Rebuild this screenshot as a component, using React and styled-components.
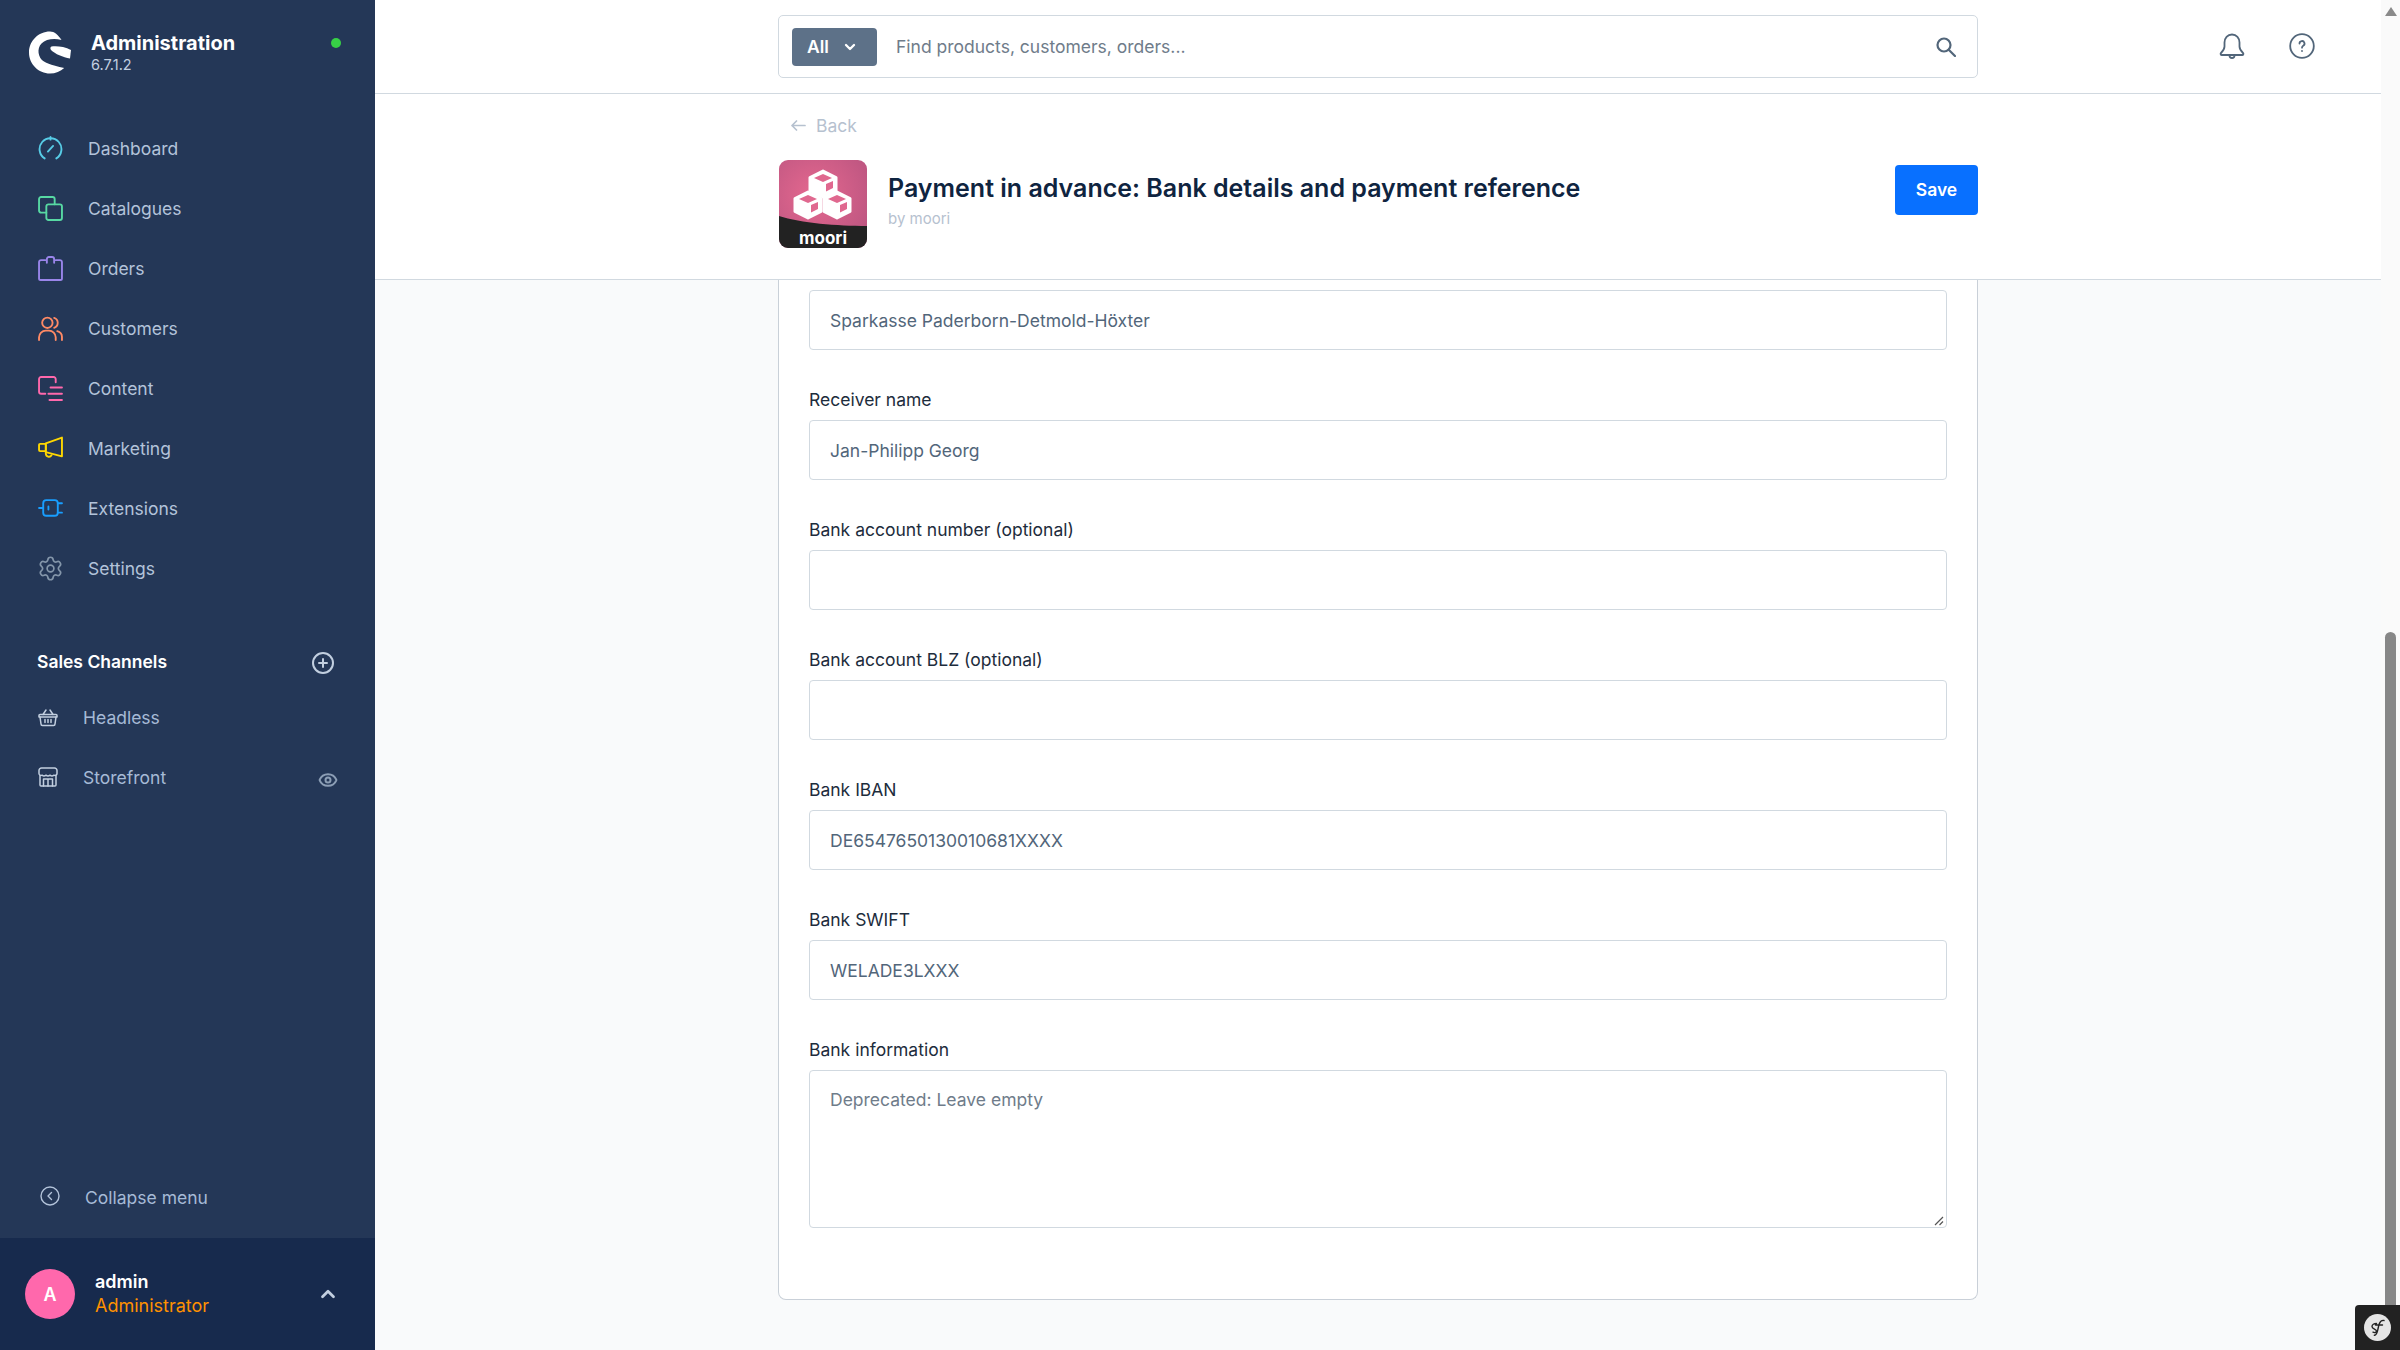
import React from 'react'
import styled, { createGlobalStyle } from 'styled-components'
import { ChevronDown, ChevronUp, CirclePlus, Eye, Settings } from 'lucide-react'

const GlobalStyle = createGlobalStyle`
  html, body {
    margin: 0;
    height: 100%;
    overflow: hidden;
  }
  * {
    box-sizing: border-box;
  }
  body {
    font-family: Inter, "Liberation Sans", sans-serif;
    background: #f9fafb;
  }
`

const Shell = styled.div`
  display: flex;
  width: 2400px;
  height: 1350px;
  overflow: hidden;
  position: relative;
`

const Sidebar = styled.aside`
  width: 375px;
  flex: none;
  display: flex;
  flex-direction: column;
  background: #243757;
`

const Brand = styled.div`
  display: flex;
  align-items: center;
  height: 93px;
  padding: 12px 34px 0 29px;
`

const BrandText = styled.div`
  margin: 0 0 1px 20px;
  flex: 1;
  display: flex;
  flex-direction: column;
`

const BrandName = styled.span`
  font-size: 20px;
  font-weight: 700;
  line-height: 24px;
  color: #fff;
`

const BrandVersion = styled.span`
  font-size: 14.5px;
  line-height: 19px;
  color: #c2cfe0;
`

const StatusDot = styled.span`
  width: 10px;
  height: 10px;
  border-radius: 50%;
  background: #37d046;
  margin-bottom: 19px;
`

const NavList = styled.nav`
  display: flex;
  flex-direction: column;
  padding-top: 25px;
`

const NavRow = styled.div`
  display: flex;
  align-items: center;
  height: 60px;
  padding-left: 38px;
  gap: 25px;
  font-size: 17.5px;
  color: #b3c3da;
`

const NavIcon = styled.svg`
  width: 25px;
  height: 25px;
  flex: none;
  fill: none;
  stroke: ${(p) => p.$color};
  stroke-width: 1.8;
  stroke-linecap: round;
  stroke-linejoin: round;
`

const GearIcon = styled(Settings)`
  margin: 0 -1px;
  flex: none;
`

const SectionHead = styled.div`
  display: flex;
  align-items: center;
  justify-content: space-between;
  margin-top: 41px;
  margin-bottom: 4px;
  height: 44px;
  padding: 0 40px 0 37px;
  font-size: 17.5px;
  font-weight: 600;
  color: #fff;

  svg {
    color: #c2cfe0;
    margin-top: 4px;
  }
`

const ChannelRow = styled.div`
  display: flex;
  align-items: center;
  height: 60px;
  padding: 0 37px 0 38px;
  gap: 25px;
  font-size: 17.5px;
  color: #a6bad6;

  span {
    flex: 1;
  }
`

const ChannelIcon = styled.svg`
  width: 20px;
  height: 20px;
  flex: none;
  fill: none;
  stroke: #c2cfe0;
  stroke-width: 1.5;
  stroke-linecap: round;
  stroke-linejoin: round;
`

const EyeIcon = styled(Eye)`
  margin-top: 5px;
`

const Spacer = styled.div`
  flex: 1;
`

const Collapse = styled.div`
  display: flex;
  align-items: center;
  height: 60px;
  padding-left: 40px;
  gap: 25px;
  margin-bottom: 11px;
  font-size: 17.5px;
  color: #a6bad6;

  svg {
    margin-top: -2px;
  }
`

const UserBar = styled.div`
  display: flex;
  align-items: center;
  height: 112px;
  padding: 0 36px 0 25px;
  background: #172a4d;
`

const Avatar = styled.div`
  width: 50px;
  height: 50px;
  border-radius: 50%;
  display: flex;
  align-items: center;
  justify-content: center;
  background: #ff68ac;
  color: #fff;
  font-size: 18px;
  font-weight: 600;
`

const UserText = styled.div`
  flex: 1;
  margin-left: 20px;
  display: flex;
  flex-direction: column;
  font-size: 18px;
  line-height: 24px;
`

const UserName = styled.span`
  color: #fff;
  font-weight: 600;
`

const UserRole = styled.span`
  color: #ff9100;
`

const Main = styled.main`
  flex: 1;
  min-width: 0;
  display: flex;
  flex-direction: column;
  padding-right: 19px;
  position: relative;
`

const TopBar = styled.header`
  height: 94px;
  flex: none;
  background: #fff;
  border-bottom: 1px solid #d1d9e0;
  display: flex;
  align-items: center;
  padding-left: 403px;
`

const SearchBox = styled.div`
  width: 1200px;
  height: 63px;
  display: flex;
  align-items: center;
  padding: 0 21px 0 13px;
  border: 1px solid #d1d9e0;
  border-radius: 5px;
`

const ScopeButton = styled.div`
  width: 85px;
  height: 38px;
  border-radius: 4px;
  background: #5d7188;
  color: #fff;
  font-size: 17.5px;
  font-weight: 600;
  display: flex;
  align-items: center;
  gap: 13px;
  padding-left: 15px;
`

const SearchText = styled.span`
  flex: 1;
  margin-left: 19px;
  font-size: 17.5px;
  color: #6f7c8a;
`

const SearchGlyph = styled.svg`
  width: 20px;
  height: 20px;
  fill: none;
  stroke: #52667a;
  stroke-width: 2.2;
  stroke-linecap: round;
`

const TopIcons = styled.div`
  display: flex;
  align-items: center;
  gap: 44px;
  margin: -1px 0 0 241px;
`

const TopIcon = styled.svg`
  width: 26px;
  height: 26px;
  fill: none;
  stroke: #52667a;
  stroke-width: 1.8;
  stroke-linecap: round;
  stroke-linejoin: round;
`

const PageHead = styled.section`
  height: 186px;
  flex: none;
  background: #fff;
  border-bottom: 1px solid #d1d9e0;
  padding: 19px 0 0 403px;
`

const BackLink = styled.div`
  display: flex;
  align-items: center;
  gap: 10px;
  height: 24px;
  padding-left: 13px;
  font-size: 17.5px;
  color: #b6c1cf;
`

const BackArrow = styled.svg`
  width: 15px;
  height: 11px;
  fill: none;
  stroke: #b6c1cf;
  stroke-width: 1.7;
  stroke-linecap: round;
  stroke-linejoin: round;
`

const TitleRow = styled.div`
  display: flex;
  align-items: center;
  width: 1200px;
  margin-top: 23px;
  padding-left: 1px;
`

const AppLogo = styled.div`
  width: 88px;
  height: 88px;
  border-radius: 9px;
  overflow: hidden;
  position: relative;
  flex: none;
  background: radial-gradient(circle at 40% 40%, #e5688f, #b5527e);
`

const LogoLabel = styled.span`
  position: absolute;
  left: 0;
  right: 0;
  bottom: 0;
  text-align: center;
  color: #fff;
  font-size: 17px;
  font-weight: 700;
  line-height: 20px;
`

const TitleText = styled.div`
  flex: 1;
  margin: 0 0 7px 21px;
  display: flex;
  flex-direction: column;
`

const Title = styled.h1`
  margin: 0;
  font-size: 25px;
  font-weight: 600;
  line-height: 34px;
  color: #0f2440;
`

const Byline = styled.span`
  font-size: 15px;
  line-height: 22px;
  margin-top: 3px;
  color: #b6c1cf;
`

const SaveButton = styled.button`
  width: 83px;
  height: 50px;
  margin-bottom: 29px;
  border: 0;
  border-radius: 4px;
  background: #0870ff;
  color: #fff;
  font: 600 17.5px Inter, sans-serif;
`

const Body = styled.div`
  flex: 1;
  min-height: 0;
  padding-left: 403px;
`

const Card = styled.div`
  width: 1200px;
  height: 1020px;
  padding: 10px 30px 0;
  background: #fff;
  border: 1px solid #c9d0d8;
  border-top: 0;
  border-radius: 0 0 8px 8px;
`

const Field = styled.div`
  margin-bottom: 30px;
`

const Label = styled.label`
  display: block;
  height: 40px;
  padding-top: 8px;
  font-size: 17.5px;
  line-height: 24px;
  color: #1d2c3c;
`

const Input = styled.div`
  height: 60px;
  padding: 0 20px;
  display: flex;
  align-items: center;
  border: 1px solid #d1d9e0;
  border-radius: 4px;
  font-size: 17.5px;
  color: #52667a;
`

const TextArea = styled.div`
  height: 158px;
  padding: 17px 20px;
  position: relative;
  border: 1px solid #d1d9e0;
  border-radius: 4px;
  font-size: 17.5px;
  line-height: 24px;
  color: #6f7c8a;

  svg {
    position: absolute;
    right: 2px;
    bottom: 1px;
  }
`

const Scrollbar = styled.div`
  position: absolute;
  top: 0;
  right: 0;
  bottom: 0;
  width: 19px;
  background: #fafafa;
`

const ScrollThumb = styled.div`
  position: absolute;
  top: 632px;
  bottom: 0;
  left: 4px;
  width: 11px;
  border-radius: 6px 6px 0 0;
  background: #878787;
`

const ScrollArrow = styled.div`
  position: absolute;
  top: 7px;
  left: 4px;
  width: 0;
  height: 0;
  border-left: 6px solid transparent;
  border-right: 6px solid transparent;
  border-bottom: 9px solid #8a8a8a;
`

const DebugToolbar = styled.div`
  position: absolute;
  right: 0;
  bottom: 0;
  width: 45px;
  height: 45px;
  padding: 9px;
  background: #222;
  border-top-left-radius: 4px;
`

// menu entries, the drawings are redone by hand from the reference
const NAV = [
  {
    label: 'Dashboard',
    color: '#57cce6',
    icon: (
      <>
        <path d="M6.4 21.5A10.5 10.5 0 1 1 17.6 21.5" />
        <path d="M9.5 15 14.5 9.5" />
        <path d="M12 1v2.5" />
      </>
    ),
  },
  {
    label: 'Catalogues',
    color: '#57d9a3',
    icon: (
      <>
        <path d="M8 16H3a2 2 0 0 1-2-2V3a2 2 0 0 1 2-2h11a2 2 0 0 1 2 2v5" />
        <rect x="8" y="8" width="15" height="15" rx="2" />
      </>
    ),
  },
  {
    label: 'Orders',
    color: '#9a85ea',
    icon: (
      <>
        <path d="M7 4H3a2 2 0 0 0-2 2v15.5A1.5 1.5 0 0 0 2.5 23h19a1.5 1.5 0 0 0 1.5-1.5V6a2 2 0 0 0-2-2h-4" />
        <path d="M8.5 6.5V3a2 2 0 0 1 2-2h3a2 2 0 0 1 2 2v3.5" />
      </>
    ),
  },
  {
    label: 'Customers',
    color: '#ff8a65',
    icon: (
      <>
        <circle cx="9" cy="6.5" r="5" />
        <path d="M1 23v-2.5A6.5 6.5 0 0 1 7.5 14h3a6.5 6.5 0 0 1 6.5 6.5V23" />
        <path d="M15.5 1.8a5 5 0 0 1 0 9.5" />
        <path d="M18.5 14.5A6 6 0 0 1 23 20.5V23" />
      </>
    ),
  },
  {
    label: 'Content',
    color: '#ff68ac',
    icon: (
      <>
        <path d="M17 6V3a2 2 0 0 0-2-2H3a2 2 0 0 0-2 2v12a2 2 0 0 0 2 2h4" />
        <path d="M12 11h11M10 17h13M11 23h12" />
      </>
    ),
  },
  {
    label: 'Marketing',
    color: '#ffd700',
    icon: (
      <>
        <path d="M7.5 7 23 1.5v18L7.5 15.5z" />
        <rect x="1" y="7.5" width="6.5" height="7" rx="1" />
        <path d="M7.5 15.5V17a3 3 0 0 0 5.5 1.5" />
      </>
    ),
  },
  {
    label: 'Extensions',
    color: '#189eff',
    icon: (
      <>
        <rect x="5" y="4" width="14" height="15" rx="3" />
        <path d="M1 11.5h4M19 7h4M19 16h4M10 10v3" />
      </>
    ),
  },
]

const Logo = () => (
  <svg width="42" height="43" viewBox="0 0 42 42">
    <path
      fill="#fff"
      d="M21 0C9.4 0 0 9.4 0 21s9.4 21 21 21c5.5 0 10.5-2.1 14.2-5.6-5.5-.9-14.5-3.1-20.2-6.4C9 26.5 7.5 17 12.5 12c4.5-4.5 12.5-5.5 20-3.500C29 3.200 25.500 0 21 0z"
    />
    <path fill="#fff" d="M22.5 15c4-.8 13-.2 19.5 3.500L41 27c-7-1.200-15-4.500-19-8.500-1-1-.8-3 .5-3.500z" />
  </svg>
)

const Cube = ({ x, y }) => (
  <g transform={`translate(${x} ${y})`}>
    <path fill="#fff" stroke="#fff" strokeWidth="3" strokeLinejoin="round" d="M0-13 13-6.5V6.5L0 13-13 6.5V-6.5z" />
    <path fill="#e0688f" d="M0-10 9-6 0-2-9-6z" />
    <path fill="#e0688f" d="M3 0 10-3V4L3 7.5z" />
  </g>
)

const MooriLogo = () => (
  <svg width="88" height="88" viewBox="0 0 88 88">
    <path fill="#222" d="M0 56c22 7 58 10 88 10v22H0z" />
    <Cube x={44} y={24} />
    <Cube x={29} y={45} />
    <Cube x={58} y={45} />
  </svg>
)

const fields = [
  { label: 'Receiver name', value: 'Jan-Philipp Georg' },
  { label: 'Bank account number (optional)', value: '' },
  { label: 'Bank account BLZ (optional)', value: '' },
  { label: 'Bank IBAN', value: 'DE6547650130010681XXXX' },
  { label: 'Bank SWIFT', value: 'WELADE3LXXX' },
]

const App = () => {
  return (
    <>
      <GlobalStyle />
      <Shell>
        <Sidebar>
          <Brand>
            <Logo />
            <BrandText>
              <BrandName>Administration</BrandName>
              <BrandVersion>6.7.1.2</BrandVersion>
            </BrandText>
            <StatusDot />
          </Brand>
          <NavList>
            {NAV.map((item) => (
              <NavRow key={item.label}>
                <NavIcon viewBox="0 0 24 24" $color={item.color}>
                  {item.icon}
                </NavIcon>
                {item.label}
              </NavRow>
            ))}
            <NavRow>
              <GearIcon size={27} strokeWidth={1.5} color="#8496aa" />
              Settings
            </NavRow>
          </NavList>
          <SectionHead>
            Sales Channels
            <CirclePlus size={24} strokeWidth={2} />
          </SectionHead>
          <ChannelRow>
            <ChannelIcon viewBox="0 0 20 20">
              <path d="M1 8.5a1 1 0 0 1 1-1h16a1 1 0 0 1 1 1V10H1z" />
              <path d="M2 10l1 7a1.5 1.5 0 0 0 1.5 1.5h11A1.5 1.5 0 0 0 17 17l1-7" />
              <path d="M5 7.5 8 3M15 7.5 12 3M7 12.5v3M10 12.5v3M13 12.5v3" />
            </ChannelIcon>
            <span>Headless</span>
          </ChannelRow>
          <ChannelRow>
            <ChannelIcon viewBox="0 0 20 20">
              <path d="M2 8.5V18a1 1 0 0 0 1 1h14a1 1 0 0 0 1-1V8.5" />
              <path d="M3.5 1h13A2.5 2.5 0 0 1 19 3.5v3a2 2 0 0 1-3 1.7 3.5 3.5 0 0 1-4 0 3.5 3.5 0 0 1-4 0 3.5 3.5 0 0 1-4 0 2 2 0 0 1-3-1.7v-3A2.5 2.5 0 0 1 3.5 1z" />
              <path d="M5.5 19v-7h9v7M10 12v7" />
            </ChannelIcon>
            <span>Storefront</span>
            <EyeIcon size={20} strokeWidth={2.4} color="#8c9eb5" />
          </ChannelRow>
          <Spacer />
          <Collapse>
            <svg width="20" height="20" viewBox="0 0 20 20" fill="none" stroke="#b3c3da" strokeWidth="1.4" strokeLinecap="round" strokeLinejoin="round">
              <circle cx="10" cy="10" r="9" />
              <path d="M11.5 6.5 8 10l3.5 3.5" />
            </svg>
            Collapse menu
          </Collapse>
          <UserBar>
            <Avatar>A</Avatar>
            <UserText>
              <UserName>admin</UserName>
              <UserRole>Administrator</UserRole>
            </UserText>
            <ChevronUp size={22} strokeWidth={3} color="#c2cfe0" />
          </UserBar>
        </Sidebar>
        <Main>
          <TopBar>
            <SearchBox>
              <ScopeButton>
                All
                <ChevronDown size={16} strokeWidth={3.5} />
              </ScopeButton>
              <SearchText>Find products, customers, orders...</SearchText>
              <SearchGlyph viewBox="0 0 20 20">
                <circle cx="8" cy="8" r="6.5" />
                <path d="M13 13l6 6" />
              </SearchGlyph>
            </SearchBox>
            <TopIcons>
              <TopIcon viewBox="0 0 26 26">
                <path d="M13 1.5c-4.5 0-7.5 3.5-7.5 8v4c0 3-2 5-3.500 6.500-.8.8-.3 2 .8 2h20.400c1.100 0 1.600-1.200.8-2-1.500-1.500-3.500-3.500-3.500-6.500v-4c0-4.500-3-8-7.500-8z" />
                <path d="M10.500 22.500c0 1.500 1 2.500 2.500 2.500s2.500-1 2.500-2.500" />
              </TopIcon>
              <TopIcon viewBox="0 0 26 26">
                <circle cx="13" cy="13" r="11.800" />
                <path d="M10.500 10.500a2.500 2.500 0 1 1 3.700 2.200c-.8.500-1.200 1-1.200 2" />
                <path d="M13 18h.01" />
              </TopIcon>
            </TopIcons>
          </TopBar>
          <PageHead>
            <BackLink>
              <BackArrow viewBox="0 0 15 11">
                <path d="M1 5.5h13M5.5 1 1 5.5 5.5 10" />
              </BackArrow>
              Back
            </BackLink>
            <TitleRow>
              <AppLogo>
                <MooriLogo />
                <LogoLabel>moori</LogoLabel>
              </AppLogo>
              <TitleText>
                <Title>Payment in advance: Bank details and payment reference</Title>
                <Byline>by moori</Byline>
              </TitleText>
              <SaveButton>Save</SaveButton>
            </TitleRow>
          </PageHead>
          <Body>
            <Card>
              <Field>
                <Input>Sparkasse Paderborn-Detmold-Höxter</Input>
              </Field>
              {fields.map((f) => (
                <Field key={f.label}>
                  <Label>{f.label}</Label>
                  <Input>{f.value}</Input>
                </Field>
              ))}
              <Field>
                <Label>Bank information</Label>
                <TextArea>
                  Deprecated: Leave empty
                  <svg width="10" height="10" viewBox="0 0 10 10" stroke="#555" strokeWidth="1.2">
                    <path d="M1 9 9 1M5.5 9 9 5.5" />
                  </svg>
                </TextArea>
              </Field>
            </Card>
          </Body>
          <Scrollbar>
            <ScrollArrow />
            <ScrollThumb />
          </Scrollbar>
        </Main>
        <DebugToolbar>
          <svg width="27" height="27" viewBox="0 0 27 27">
            <circle cx="13.5" cy="13.5" r="13.5" fill="#e5e5e5" />
            <path
              d="M20 6.5c-2.5-.5-4 1.3-4.8 3.5-.5 1.5-.8 3-1.3 5.3-.6 3.2-1.2 5.7-3.5 6M11.500 11h7M12.500 9.500c-2.500 0-4.500 1-4.500 3 0 2.500 4.500 2.500 4.500 4.500 0 1.500-2 2-3.500 1.200"
              fill="none"
              stroke="#222"
              strokeWidth="1.4"
              strokeLinecap="round"
            />
          </svg>
        </DebugToolbar>
      </Shell>
    </>
  )
}

export default App
